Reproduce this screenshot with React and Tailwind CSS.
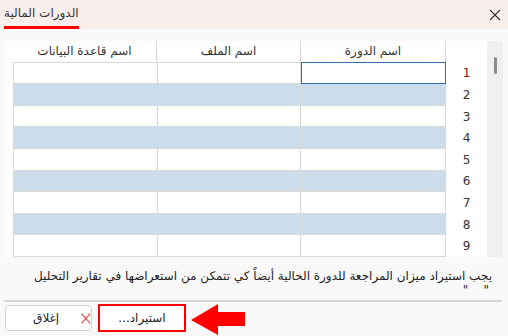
import React from "react";

const rows = [1, 2, 3, 4, 5, 6, 7, 8, 9];

export default function App() {
  return (
    <div
      className="w-[508px] h-[336px] bg-[#f9f9f9] flex flex-col overflow-hidden text-[#1f1f1f]"
      style={{ fontFamily: '"DejaVu Sans", sans-serif' }}
    >
      {/* Title bar */}
      <div className="h-[29px] bg-[#f9eeec] flex items-start justify-between shrink-0">
        <div
          dir="rtl"
          className="ml-[4px] mt-[5px] h-[24px] border-b-[3px] border-[#ff0000] text-[12px] leading-[17px] text-[#333] whitespace-nowrap"
        >
          الدورات المالية
        </div>
        <svg width="12" height="12" viewBox="0 0 12 12" className="mt-[9px] mr-[7px]">
          <path d="M1 1 L11 11 M11 1 L1 11" stroke="#333" strokeWidth="1.1" />
        </svg>
      </div>

      {/* Table panel */}
      <div className="mt-[12px] ml-[4px] w-[499px] h-[216px] bg-white flex shrink-0">
        {/* grid */}
        <div className="w-[442px] flex flex-col">
          <div className="h-[21px] flex text-[12px] text-[#333]" dir="ltr">
            <div className="w-[153px] border-r border-[#d9d9d9] flex items-center justify-center pl-[9px]">
              <span dir="rtl">اسم قاعدة البيانات</span>
            </div>
            <div className="w-[144px] border-r border-[#d9d9d9] flex items-center justify-center">
              <span dir="rtl">اسم الملف</span>
            </div>
            <div className="w-[145px] border-r border-[#d9d9d9] flex items-center justify-center">
              <span dir="rtl">اسم الدورة</span>
            </div>
          </div>
          <div className="ml-[9px] border-l border-t border-[#d9d9d9] flex flex-col">
            {rows.map((r) => (
              <div
                key={r}
                className={`h-[21.6px] flex border-b border-[#d9d9d9] ${
                  r % 2 === 0 ? "bg-[#cbdcea]" : "bg-white"
                }`}
              >
                <div className="w-[144px] border-r border-[#d9d9d9]" />
                <div className="w-[144px] border-r border-[#d9d9d9]" />
                {r === 1 ? (
                  <div className="w-[145px] h-[22.6px] -mt-[1px] border border-[#2f6db5]" />
                ) : (
                  <div className="w-[145px] border-r border-[#d9d9d9]" />
                )}
              </div>
            ))}
          </div>
        </div>
        {/* row numbers */}
        <div className="w-[41px] flex flex-col">
          <div className="h-[21px]" />
          <div className="pt-[1px] flex flex-col">
            {rows.map((r) => (
              <div
                key={r}
                className={`h-[21.6px] flex items-center justify-center text-[12px] ${
                  r === 1 ? "text-[#7a1010]" : "text-[#333]"
                }`}
              >
                {r}
              </div>
            ))}
          </div>
        </div>
        {/* scrollbar */}
        <div className="w-[16px] bg-[#f0f0f0] flex justify-center pt-[16px]">
          <div className="w-[3px] h-[17px] bg-[#8a8a8a] rounded-full" />
        </div>
      </div>

      {/* message */}
      <div dir="rtl" className="mt-[12px] mr-[16px] text-[12px] leading-[14px] text-[#222]">
        <div className="whitespace-nowrap">
          يجب استيراد ميزان المراجعة للدورة الحالية أيضاً كي تتمكن من استعراضها في تقارير التحليل
        </div>
        <div className="mr-[3px] whitespace-pre">{'"    "'}</div>
      </div>
      <div className="mt-[3px] ml-[4px] w-[498px] h-[2px] bg-[#d6d6d6]" />

      {/* buttons */}
      <div className="mt-[3px] ml-[5px] flex items-start">
        <div className="w-[87px] h-[26px] bg-white border border-[#d4d4d4] rounded-[4px] flex items-center pl-[25px] text-[12px] text-[#222]">
          <span dir="rtl" className="w-[31px] text-center">إغلاق</span>
          <svg width="10" height="11" viewBox="0 0 10 11" className="ml-[20px]">
            <path d="M0.5 0.5 L9.5 10.5 M9.5 0.5 L0.5 10.5" stroke="#e04848" strokeWidth="1.2" />
          </svg>
        </div>
        <div className="ml-[6px] -mt-[1px] w-[88px] h-[28px] bg-white border-2 border-[#ff0000] flex items-center justify-center text-[12px] text-[#222]">
          <span dir="rtl">استيراد...</span>
        </div>
        <svg width="56" height="33" viewBox="0 0 56 33" className="ml-[4px] -mt-[2px]">
          <polygon points="1,17 28,1 28,9 55,9 55,23 28,23 28,32" fill="#ff0000" />
        </svg>
      </div>
    </div>
  );
}
